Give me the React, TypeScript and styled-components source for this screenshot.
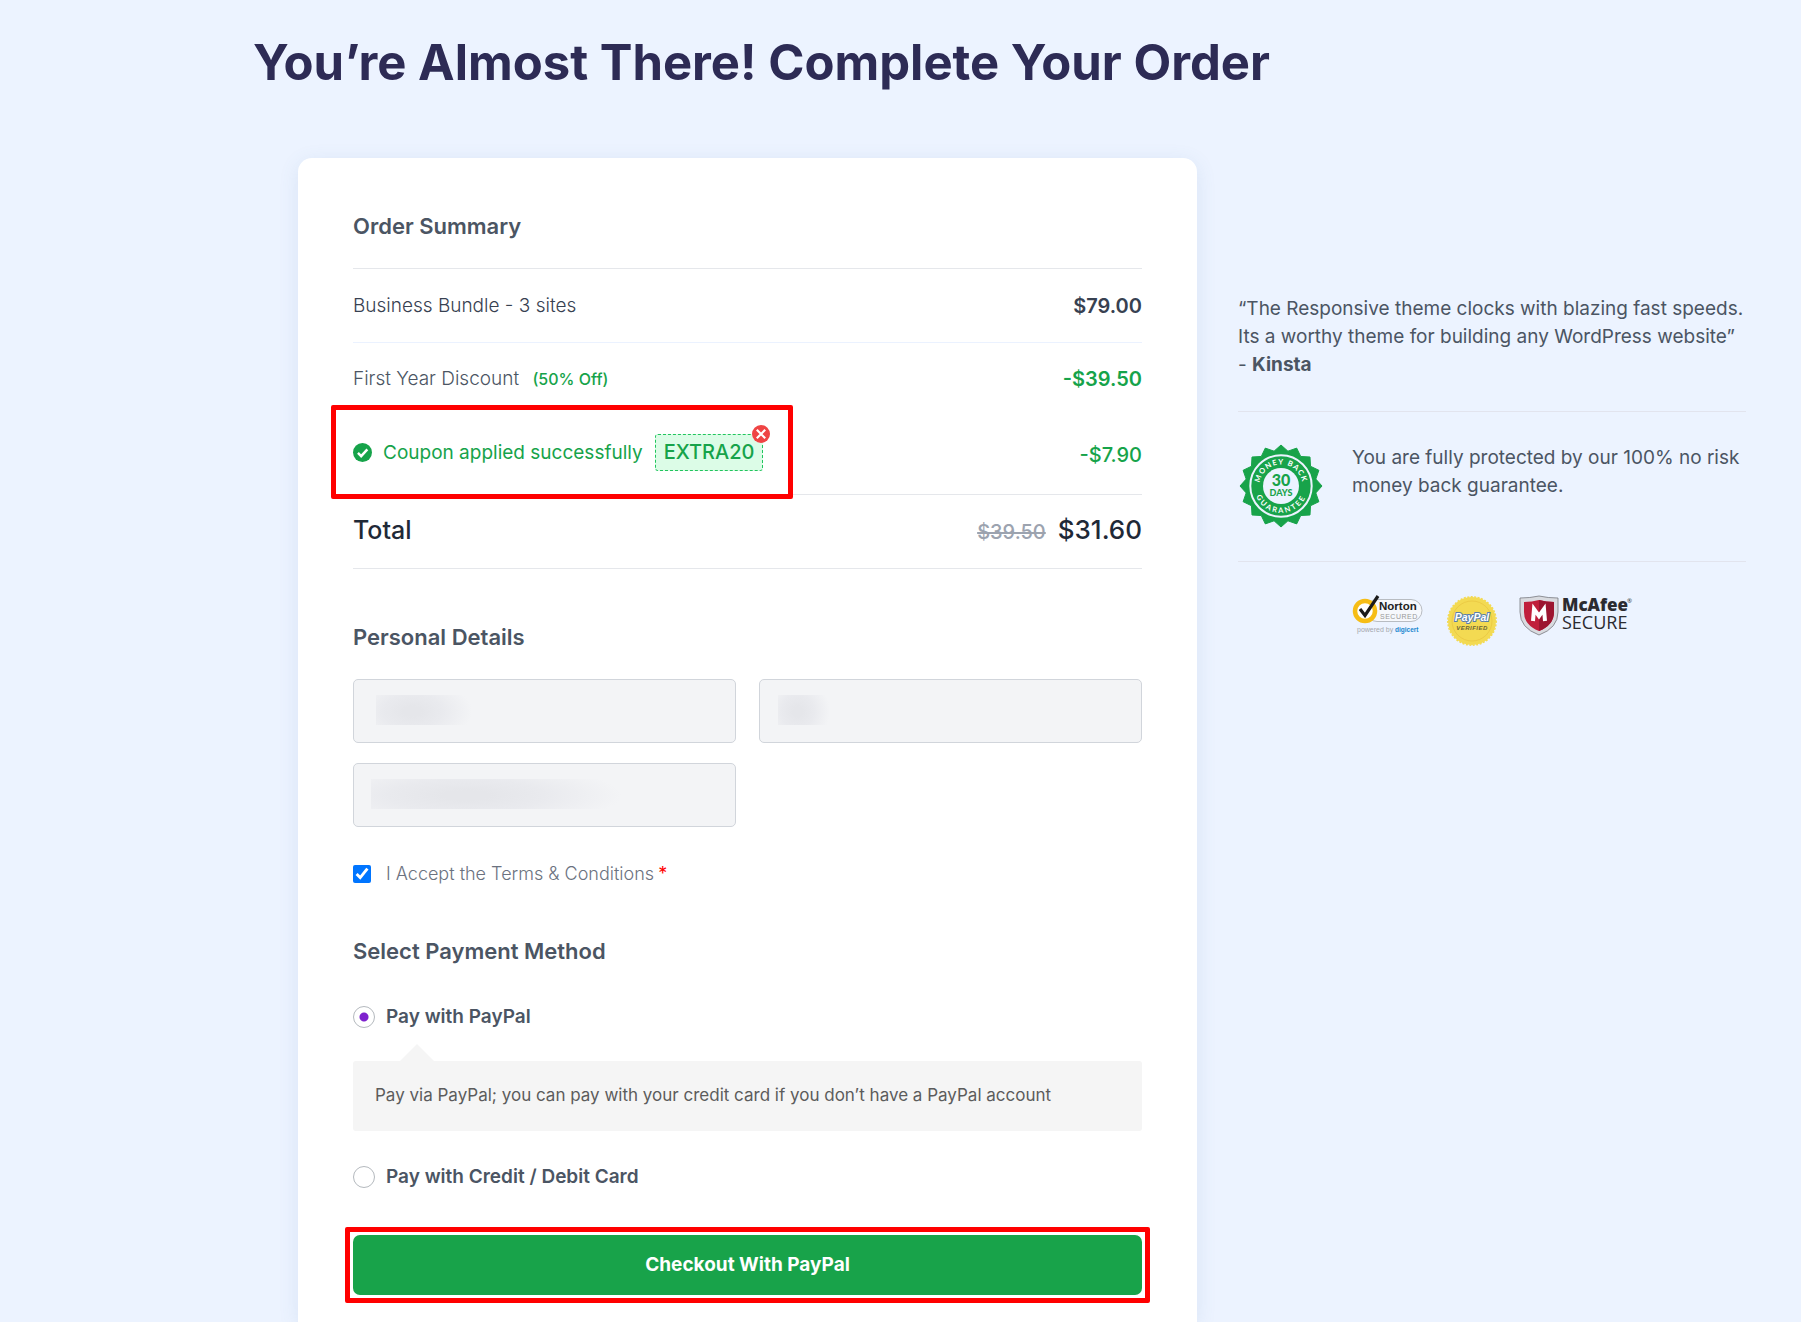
import React from "react";
import styled, { createGlobalStyle } from "styled-components";

const GlobalStyle = createGlobalStyle`
  *, *::before, *::after { box-sizing: border-box; }
  body {
    margin: 0;
    background: #ecf3ff;
    color: #4b5563;
    font-family: Inter, "Liberation Sans", sans-serif;
    font-size: 19px;
  }
`;

const Page = styled.main`
  min-height: 100vh;
  display: flex;
  flex-direction: column;
`;

const Title = styled.h1`
  margin: 0;
  padding: 33px 32px 65px 253px;
  font-size: 49px;
  line-height: 60px;
  font-weight: 700;
  color: #2d2b55;
`;

const Columns = styled.div`
  flex: 1;
  display: grid;
  grid-template-columns: minmax(0, 899fr) minmax(0, 508fr);
  gap: 41px;
  padding: 0 55px 0 298px;
`;

const Card = styled.form`
  padding: 50px 55px 19px;
  background: #fff;
  border-radius: 14px 14px 0 0;
  box-shadow: 0 4px 20px rgba(80, 120, 170, 0.12);
`;

const SectionTitle = styled.h2<{ $top?: number; $bottom: number }>`
  margin: ${(p) => p.$top ?? 0}px 0 ${(p) => p.$bottom}px;
  font-size: 22px;
  line-height: 36px;
  font-weight: 600;
`;

const Summary = styled.table`
  width: 100%;
  border-collapse: collapse;
  border-top: 1px solid #e5e7eb;
  line-height: 28px;
`;

const Row = styled.tr<{ $line?: string; $height: number }>`
  height: ${(p) => p.$height}px;
  border-bottom: ${(p) => (p.$line ? `1px solid ${p.$line}` : "none")};
`;

const Item = styled.th<{ $total?: boolean; $strong?: boolean }>`
  padding: ${(p) => (p.$total ? "0 0 4px" : "0")};
  text-align: left;
  font-size: ${(p) => (p.$total ? 25 : 19)}px;
  font-weight: ${(p) => (p.$total ? 500 : 300)};
  color: ${(p) => (p.$total ? "#1f2937" : p.$strong ? "#374151" : "#4b5563")};
`;

const Amount = styled.td<{ $color: string; $weight?: number; $total?: boolean }>`
  padding: ${(p) => (p.$total ? "0 0 2px" : "0")};
  text-align: right;
  font-size: ${(p) => (p.$total ? 26 : 20)}px;
  font-weight: ${(p) => p.$weight ?? 500};
  color: ${(p) => p.$color};
`;

const OldPrice = styled.s`
  margin-right: 12px;
  font-size: 20px;
  color: #9ca3af;
`;

const Percent = styled.span`
  margin-left: 8px;
  font-size: 16px;
  font-weight: 500;
  color: #16a34a;
`;

const Coupon = styled.div`
  position: relative;
  display: flex;
  align-items: center;
  width: fit-content;
  margin-bottom: 4px;
  font-weight: 400;
  color: #16a34a;

  svg { display: block; }
`;

const CouponText = styled.span`
  margin: 0 12px 0 11px;
`;

const Code = styled.span`
  position: relative;
  padding: 4px 8px;
  border: 1px dashed #22c55e;
  border-radius: 3px;
  background: #dcfce7;
  font-size: 20px;
  font-weight: 500;
  line-height: 27px;
`;

const RemoveButton = styled.button`
  position: absolute;
  top: -10px;
  right: -8px;
  width: 18px;
  height: 18px;
  padding: 0;
  border: 0;
  border-radius: 50%;
  background: #fff;
`;

const CouponHighlight = styled.span`
  position: absolute;
  inset: -29px -30px -28px -22px;
  border: 5px solid #ff0000;
  border-radius: 2px;
  pointer-events: none;
`;

const Fields = styled.div`
  display: grid;
  grid-template-columns: 1fr 1fr;
  gap: 20px 23px;
`;

const Field = styled.input<{ $x: number; $w: number }>`
  width: 100%;
  height: 64px;
  padding: 0 22px;
  border: 1px solid #d1d5db;
  border-radius: 5px;
  font: inherit;
  color: #4b5563;
  background-color: #f3f4f6;
  background-image: radial-gradient(ellipse 62% 110% at 38% 55%, #e5e6ea 15%, #e9eaee 50%, #f3f4f6 100%);
  background-repeat: no-repeat;
  background-position: ${(p) => p.$x}px 15px;
  background-size: ${(p) => p.$w}px 30px;
`;

const Terms = styled.label`
  display: flex;
  align-items: center;
  margin-top: 33px;
  font-size: 18px;
  line-height: 28px;
  color: #6b7280;
  font-weight: 300;
`;

const Checkbox = styled.input`
  width: 18px;
  height: 18px;
  margin: 0 15px 0 0;
  accent-color: #0075ff;
`;

const Required = styled.span`
  margin-left: 4px;
  color: #ff0000;
  font-weight: 400;
`;

const Method = styled.label`
  display: flex;
  align-items: center;
  gap: 11px;
  line-height: 28px;
  font-weight: 600;
`;

const Radio = styled.input`
  appearance: none;
  width: 22px;
  height: 22px;
  margin: 0;
  border: 1px solid #b4b9be;
  border-radius: 50%;
  background: #fff;

  &:checked {
    background: radial-gradient(circle, #7e22ce 4px, #fff 5px);
  }
`;

const MethodInfo = styled.p`
  position: relative;
  margin: 30px 0 32px;
  padding: 20px 22px 22px;
  border-radius: 3px;
  background: #f5f5f5;
  color: #5c5c5c;
  font-size: 17px;
  line-height: 28px;

  &::before {
    content: "";
    position: absolute;
    left: 47px;
    top: -17px;
    border: 17px solid transparent;
    border-top: 0;
    border-bottom-color: #f5f5f5;
  }
`;

const Checkout = styled.button`
  position: relative;
  display: block;
  width: 100%;
  margin-top: 44px;
  padding: 16px;
  border: 0;
  border-radius: 7px;
  background: #18a34a;
  color: #fff;
  font: inherit;
  font-weight: 700;
  line-height: 28px;

  &::after {
    content: "";
    position: absolute;
    inset: -8px;
    border: 5px solid #ff0000;
    border-radius: 2px;
  }
`;

const Aside = styled.aside`
  padding-top: 137px;
  line-height: 28px;
`;

const Quote = styled.blockquote`
  margin: 0;
  padding-bottom: 32px;
  border-bottom: 1px solid #e2e4ee;
`;

const Guarantee = styled.section`
  display: flex;
  gap: 28px;
  padding: 32px 0 33px;
  border-bottom: 1px solid #e2e4ee;

  svg { flex: none; }
  p { margin: 0; }
`;

const Logos = styled.div`
  display: flex;
  justify-content: center;
  gap: 22px;
  padding-top: 29px;
`;

const CheckIcon = () => (
  <svg width="19" height="19" viewBox="0 0 20 20" aria-hidden="true">
    <circle cx="10" cy="10" r="10" fill="#16a34a" />
    <path d="M5.2 10.4l3.4 3.4 6.5-7" fill="none" stroke="#fff" strokeWidth="2.6" />
  </svg>
);

const CrossIcon = () => (
  <svg width="18" height="18" viewBox="0 0 18 18" aria-hidden="true">
    <circle cx="9" cy="9" r="9" fill="#ef4444" />
    <path d="M4.8 4.8l8.4 8.4M13.2 4.8l-8.4 8.4" stroke="#fff" strokeWidth="2.2" />
  </svg>
);

const sealPoints = Array.from({ length: 32 }, (_, i) => {
  const radius = i % 2 ? 35.5 : 41;
  const angle = (i * Math.PI) / 16;
  return `${(42 + radius * Math.cos(angle)).toFixed(2)},${(42 + radius * Math.sin(angle)).toFixed(2)}`;
}).join(" ");

const Seal = () => (
  <svg width="86" height="84" viewBox="-1 0 86 84" role="img" aria-label="30 days money back guarantee">
    <defs>
      <path id="seal-top" d="M20.5 42a21.5 21.5 0 0 1 43 0" />
      <path id="seal-bottom" d="M15 42a27 27 0 0 0 54 0" />
    </defs>
    <polygon points={sealPoints} fill="#18a34a" stroke="#18a34a" strokeLinejoin="round" />
    <circle cx="42" cy="42" r="30.7" fill="none" stroke="#ecf3ff" strokeWidth="2" />
    <circle cx="42" cy="42" r="18" fill="#ecf3ff" />
    <g fill="#fff" fontSize="7.5" fontWeight="700" textAnchor="middle" fontFamily="Lato, sans-serif" letterSpacing="1.1">
      <text><textPath href="#seal-top" startOffset="50%">MONEY BACK</textPath></text>
      <text letterSpacing="2"><textPath href="#seal-bottom" startOffset="50%">GUARANTEE</textPath></text>
    </g>
    <g fill="#18a34a" fontWeight="900" textAnchor="middle" fontFamily="Lato, sans-serif">
      <text x="42" y="42" fontSize="16">30</text>
      <text x="42" y="52" fontSize="9">DAYS</text>
    </g>
  </svg>
);

const Norton = () => (
  <svg width="72" height="44" viewBox="-1 -4 72 44" role="img" aria-label="Norton Secured powered by digicert">
    <rect x="14" y="4.5" width="56" height="22" rx="11" fill="#f6f8fc" stroke="#b8bcc2" />
    <circle cx="13" cy="16" r="10" fill="#fff" stroke="#f6bd16" strokeWidth="4.5" />
    <path d="M8 14l5 6.5L26 1" fill="none" stroke="#1b1b1b" strokeWidth="3.2" />
    <g fontFamily="Liberation Sans, sans-serif">
      <text x="27" y="15" fontSize="11.5" fontWeight="700" fill="#222">Norton</text>
      <text x="28" y="24" fontSize="7" letterSpacing="0.5" fill="#999">SECURED</text>
      <text x="5" y="37" fontSize="7" fill="#a4a8ae">powered by</text>
      <text x="43" y="37" fontSize="6.5" fontWeight="700" fill="#1b87cf">digicert</text>
    </g>
  </svg>
);

const PayPalSeal = () => (
  <svg width="52" height="56" viewBox="-1 -4 52 56" role="img" aria-label="PayPal verified">
    <circle cx="26" cy="26" r="24" fill="#f3da52" />
    <circle cx="26" cy="26" r="24.2" fill="none" stroke="#f3da52" strokeWidth="1.5" strokeDasharray="2 1.5" />
    <circle cx="26" cy="26" r="20" fill="none" stroke="#eccb45" strokeWidth="1" />
    <g fontFamily="Liberation Sans, sans-serif" fontStyle="italic" fontWeight="700" textAnchor="middle">
      <text x="26" y="26" fontSize="10.5" fill="#fff" stroke="#5a7fa8" strokeWidth="2" paintOrder="stroke">PayPal</text>
      <text x="26" y="35" fontSize="6" letterSpacing="0.5" fill="#6c6636">VERIFIED</text>
    </g>
  </svg>
);

const McAfee = () => (
  <svg width="114" height="46" viewBox="0 -4 114 46" role="img" aria-label="McAfee Secure">
    <path d="M1 3Q11 3 20 1Q29 3 39 3V17Q39 33 20 40Q1 33 1 17Z" fill="#d9dbe0" stroke="#77797f" strokeWidth="0.8" />
    <path d="M5 7Q13 7 20 5Q27 7 35 7V17Q35 30 20 36Q5 30 5 17Z" fill="#c01f3b" />
    <path d="M20 5Q27 7 35 7V17Q35 30 20 36Z" fill="#9c1530" />
    <path d="M14 26L15 14l5 7 5-7 1 12" fill="none" stroke="#fff" strokeWidth="4" />
    <g fontFamily="Open Sans, sans-serif" fill="#2b2b30">
      <text x="43" y="16" fontSize="17" fontWeight="800">McAfee</text>
      <text x="43" y="34" fontSize="18">SECURE</text>
      <text x="108" y="8" fontSize="6">®</text>
    </g>
  </svg>
);

export default function App() {
  return (
    <>
      <GlobalStyle />
      <Page>
        <Title>You’re Almost There! Complete Your Order</Title>
        <Columns>
          <Card onSubmit={(e) => e.preventDefault()}>
            <SectionTitle $bottom={24}>Order Summary</SectionTitle>
            <Summary>
              <tbody>
                <Row $height={74} $line="#ebf2ff">
                  <Item scope="row" $strong>Business Bundle - 3 sites</Item>
                  <Amount $color="#374151" $weight={600}>$79.00</Amount>
                </Row>
                <Row $height={73}>
                  <Item scope="row">
                    First Year Discount <Percent>(50% Off)</Percent>
                  </Item>
                  <Amount $color="#16a34a" $weight={600}>-$39.50</Amount>
                </Row>
                <Row $height={79} $line="#e5e7eb">
                  <Item scope="row">
                    <Coupon>
                      <CheckIcon />
                      <CouponText>Coupon applied successfully</CouponText>
                      <Code>
                        EXTRA20
                        <RemoveButton type="button" aria-label="Remove coupon">
                          <CrossIcon />
                        </RemoveButton>
                      </Code>
                      <CouponHighlight />
                    </Coupon>
                  </Item>
                  <Amount $color="#16a34a">-$7.90</Amount>
                </Row>
                <Row $height={74} $line="#e5e7eb">
                  <Item scope="row" $total>Total</Item>
                  <Amount $color="#1f2937" $total>
                    <OldPrice>$39.50</OldPrice>$31.60
                  </Amount>
                </Row>
              </tbody>
            </Summary>

            <SectionTitle $top={50} $bottom={24}>Personal Details</SectionTitle>
            <Fields>
              <Field aria-label="First name" $x={22} $w={96} />
              <Field aria-label="Last name" $x={18} $w={52} />
              <Field aria-label="Email" type="email" $x={17} $w={250} />
            </Fields>
            <Terms>
              <Checkbox type="checkbox" defaultChecked />
              I Accept the Terms &amp; Conditions<Required>*</Required>
            </Terms>

            <SectionTitle $top={45} $bottom={34}>Select Payment Method</SectionTitle>
            <Method>
              <Radio type="radio" name="method" defaultChecked />
              Pay with PayPal
            </Method>
            <MethodInfo>
              Pay via PayPal; you can pay with your credit card if you don’t have a PayPal account
            </MethodInfo>
            <Method>
              <Radio type="radio" name="method" />
              Pay with Credit / Debit Card
            </Method>
            <Checkout type="submit">Checkout With PayPal</Checkout>
          </Card>

          <Aside>
            <Quote>
              “The Responsive theme clocks with blazing fast speeds. Its a worthy theme for building any
              WordPress website”
              <br />- <strong>Kinsta</strong>
            </Quote>
            <Guarantee>
              <Seal />
              <p>You are fully protected by our 100% no risk money back guarantee.</p>
            </Guarantee>
            <Logos>
              <Norton />
              <PayPalSeal />
              <McAfee />
            </Logos>
          </Aside>
        </Columns>
      </Page>
    </>
  );
}
